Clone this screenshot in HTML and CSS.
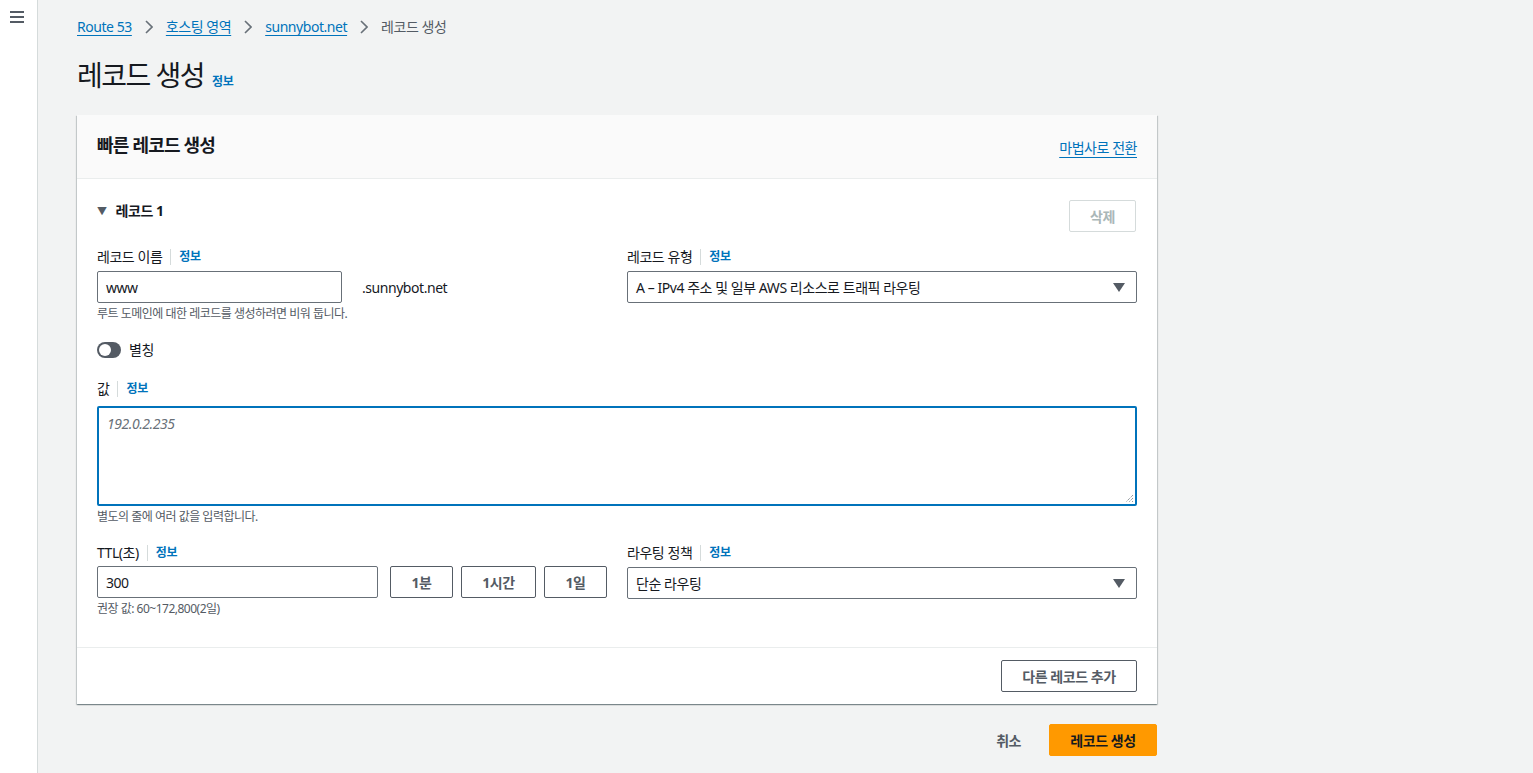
FILE: index.html
```html
<!DOCTYPE html>
<html lang="ko">
<head>
<meta charset="utf-8">
<title>레코드 생성</title>
<link rel="stylesheet" href="styles.css">
</head>
<body>
<aside class="sidebar">
  <svg class="hamburger" width="14" height="12" viewBox="0 0 14 12"><path d="M0 1h14M0 6h14M0 11h14" stroke="#545b64" stroke-width="2"/></svg>
</aside>
<main class="content">
  <nav class="breadcrumb">
    <a href="#">Route 53</a>
    <svg class="chev" width="8" height="14" viewBox="0 0 8 14"><path d="M1 1l6 6-6 6" fill="none" stroke="#687078" stroke-width="1.6"/></svg>
    <a href="#">호스팅 영역</a>
    <svg class="chev" width="8" height="14" viewBox="0 0 8 14"><path d="M1 1l6 6-6 6" fill="none" stroke="#687078" stroke-width="1.6"/></svg>
    <a href="#">sunnybot.net</a>
    <svg class="chev" width="8" height="14" viewBox="0 0 8 14"><path d="M1 1l6 6-6 6" fill="none" stroke="#687078" stroke-width="1.6"/></svg>
    <span class="current">레코드 생성</span>
  </nav>
  <div class="page-title">
    <h1>레코드 생성</h1>
    <a class="info" href="#">정보</a>
  </div>

  <section class="card">
    <header class="card-header">
      <h2>빠른 레코드 생성</h2>
      <a class="link" href="#">마법사로 전환</a>
    </header>
    <div class="card-body">
      <div class="record-head">
        <div class="record-title"><span class="caret">▼</span>레코드 1</div>
        <button class="btn btn-disabled">삭제</button>
      </div>

      <div class="grid">
        <div class="field">
          <div class="label">레코드 이름<span class="sep"></span><a class="info" href="#">정보</a></div>
          <div class="name-row">
            <div class="input name-input">www</div>
            <span class="suffix">.sunnybot.net</span>
          </div>
          <div class="hint">루트 도메인에 대한 레코드를 생성하려면 비워 둡니다.</div>
        </div>
        <div class="field">
          <div class="label">레코드 유형<span class="sep"></span><a class="info" href="#">정보</a></div>
          <div class="input select">A – IPv4 주소 및 일부 AWS 리소스로 트래픽 라우팅<span class="arrow"></span></div>
        </div>
      </div>

      <div class="toggle-row">
        <span class="toggle"><span class="knob"></span></span>
        <span>별칭</span>
      </div>

      <div class="field value-field">
        <div class="label">값<span class="sep"></span><a class="info" href="#">정보</a></div>
        <div class="textarea"><span class="placeholder">192.0.2.235</span>
          <svg class="grip" width="9" height="9" viewBox="0 0 9 9"><path d="M8 1L1 8M8 4L4 8M8 7L7 8" stroke="#687078" stroke-width="1" stroke-dasharray="1 1"/></svg>
        </div>
        <div class="hint">별도의 줄에 여러 값을 입력합니다.</div>
      </div>

      <div class="grid ttl-grid">
        <div class="field">
          <div class="label">TTL(초)<span class="sep"></span><a class="info" href="#">정보</a></div>
          <div class="ttl-row">
            <div class="input ttl-input">300</div>
            <button class="btn btn-ttl b1">1분</button>
            <button class="btn btn-ttl b2">1시간</button>
            <button class="btn btn-ttl b3">1일</button>
          </div>
          <div class="hint">권장 값: 60~172,800(2일)</div>
        </div>
        <div class="field">
          <div class="label">라우팅 정책<span class="sep"></span><a class="info" href="#">정보</a></div>
          <div class="input select">단순 라우팅<span class="arrow"></span></div>
        </div>
      </div>
    </div>
    <footer class="card-footer">
      <button class="btn btn-normal">다른 레코드 추가</button>
    </footer>
  </section>

  <div class="actions">
    <button class="btn-link">취소</button>
    <button class="btn btn-primary">레코드 생성</button>
  </div>
</main>
</body>
</html>
```

FILE: styles.css
```css
* { box-sizing: border-box; }
html, body { margin: 0; padding: 0; }
body {
  display: flex;
  min-height: 773px;
  background: #f2f3f3;
  font-family: "Noto Sans", "Noto Sans CJK KR", sans-serif;
  font-size: 14px;
  letter-spacing: -0.45px;
  color: #16191f;
}
.sidebar {
  width: 38px;
  flex: 0 0 38px;
  background: #fff;
  border-right: 1px solid #d5dbdb;
  padding: 11px 0 0 10px;
}
.hamburger { display: block; }
.content {
  padding-left: 39px;
  width: 1120px;
}
.breadcrumb {
  display: flex;
  align-items: center;
  gap: 13px;
  padding-top: 16px;
  height: 38px;
  line-height: 22px;
}
.breadcrumb a {
  color: #0073bb;
  text-decoration: underline;
  text-underline-offset: 3px;
}
.breadcrumb .current { color: #545b64; }
.chev { display: block; }
.page-title {
  display: flex;
  align-items: baseline;
  gap: 8px;
  margin-top: 19px;
  height: 36px;
}
.page-title h1 {
  margin: 0;
  font-size: 28px;
  font-weight: 400;
  line-height: 36px;
  letter-spacing: -1.5px;
}
.info {
  font-size: 12px;
  font-weight: 700;
  color: #0073bb;
  text-decoration: none;
  letter-spacing: -0.3px;
}
.card {
  margin-top: 22px;
  width: 1080px;
  background: #fff;
  box-shadow: 0 1px 1px 0 rgba(0,28,36,.3), 1px 1px 1px 0 rgba(0,28,36,.15), -1px 1px 1px 0 rgba(0,28,36,.15);
}
.card-header {
  display: flex;
  justify-content: space-between;
  align-items: flex-end;
  background: #fafafa;
  border-bottom: 1px solid #eaeded;
  padding: 19px 20px 20px;
  height: 64px;
}
.card-header h2 {
  margin: 0;
  font-size: 18px;
  font-weight: 700;
  line-height: 22px;
  letter-spacing: -0.8px;
  align-self: flex-start;
}
.link {
  color: #0073bb;
  text-decoration: underline;
  text-underline-offset: 4px;
  line-height: 20px;
  margin-bottom: 0;
}
.card-body {
  padding: 21px 20px 30px;
}
.record-head {
  display: flex;
  justify-content: space-between;
  align-items: flex-start;
}
.record-title {
  font-weight: 700;
  line-height: 22px;
  display: flex;
  align-items: center;
}
.caret {
  font-size: 10px;
  color: #545b64;
  margin-right: 9px;
}
.btn {
  font-family: inherit;
  font-size: 14px;
  font-weight: 700;
  letter-spacing: -0.45px;
  height: 32px;
  background: #fff;
  border: 1px solid #545b64;
  border-radius: 2px;
  color: #545b64;
  padding: 0 19px;
}
.btn-disabled {
  border-color: #d5dbdb;
  color: #aab7b8;
  width: 67px;
  margin-right: 1px;
}
.grid {
  display: grid;
  grid-template-columns: 510px 510px;
  column-gap: 20px;
  margin-top: 13px;
}
.label {
  display: flex;
  align-items: center;
  line-height: 22px;
  height: 22px;
  margin-top: 1px;
}
.sep {
  width: 1px;
  height: 16px;
  background: #d5dbdb;
  margin: 0 8px;
}
.input {
  height: 32px;
  border: 1px solid #687078;
  border-radius: 2px;
  padding: 0 8px;
  display: flex;
  align-items: center;
  margin-top: 3px;
  background: #fff;
}
.name-row {
  display: flex;
  align-items: center;
}
.name-input { width: 245px; }
.suffix {
  margin-left: 20px;
  margin-top: 3px;
}
.select {
  position: relative;
  padding-right: 36px;
}
.arrow {
  position: absolute;
  right: 11px;
  top: 11px;
  width: 0;
  height: 0;
  border-left: 6px solid transparent;
  border-right: 6px solid transparent;
  border-top: 9px solid #545b64;
}
.hint {
  font-size: 12px;
  line-height: 16px;
  color: #545b64;
  margin-top: 3px;
  letter-spacing: -0.5px;
}
.toggle-row {
  display: flex;
  align-items: center;
  gap: 8px;
  margin-top: 17px;
  line-height: 22px;
}
.toggle {
  width: 24px;
  height: 16px;
  border-radius: 8px;
  background: #545b64;
  position: relative;
  display: block;
}
.knob {
  position: absolute;
  left: 2px;
  top: 2px;
  width: 12px;
  height: 12px;
  border-radius: 50%;
  background: #fff;
}
.value-field { margin-top: 17px; }
.textarea {
  position: relative;
  margin-top: 6px;
  height: 100px;
  border: 2px solid #0073bb;
  border-radius: 2px;
  padding: 6px 8px;
}
.placeholder {
  font-style: italic;
  color: #687078;
}
.grip {
  position: absolute;
  right: 1px;
  bottom: 1px;
}
.value-field .hint { margin-top: 3px; }
.ttl-grid { margin-top: 16px; }
.ttl-row {
  display: flex;
  align-items: center;
  margin-top: 2px;
}
.ttl-row .input { margin-top: 0; }
.ttl-input { width: 281px; }
.btn-ttl { padding: 0; }
.b1 { width: 63px; margin-left: 12px; }
.b2 { width: 75px; margin-left: 8px; }
.b3 { width: 63px; margin-left: 8px; }
.card-footer {
  border-top: 1px solid #eaeded;
  padding: 12px 20px;
  display: flex;
  justify-content: flex-end;
}
.btn-normal { width: 136px; padding: 0; }
.actions {
  width: 1080px;
  display: flex;
  justify-content: flex-end;
  align-items: center;
  gap: 20px;
  margin-top: 20px;
}
.btn-link {
  font-family: inherit;
  font-size: 14px;
  font-weight: 700;
  letter-spacing: -0.45px;
  background: none;
  border: none;
  color: #545b64;
  padding: 0 8px;
  height: 32px;
}
.btn-primary {
  background: #ff9900;
  border-color: #ff9900;
  color: #16191f;
  width: 108px;
  padding: 0;
}
```
